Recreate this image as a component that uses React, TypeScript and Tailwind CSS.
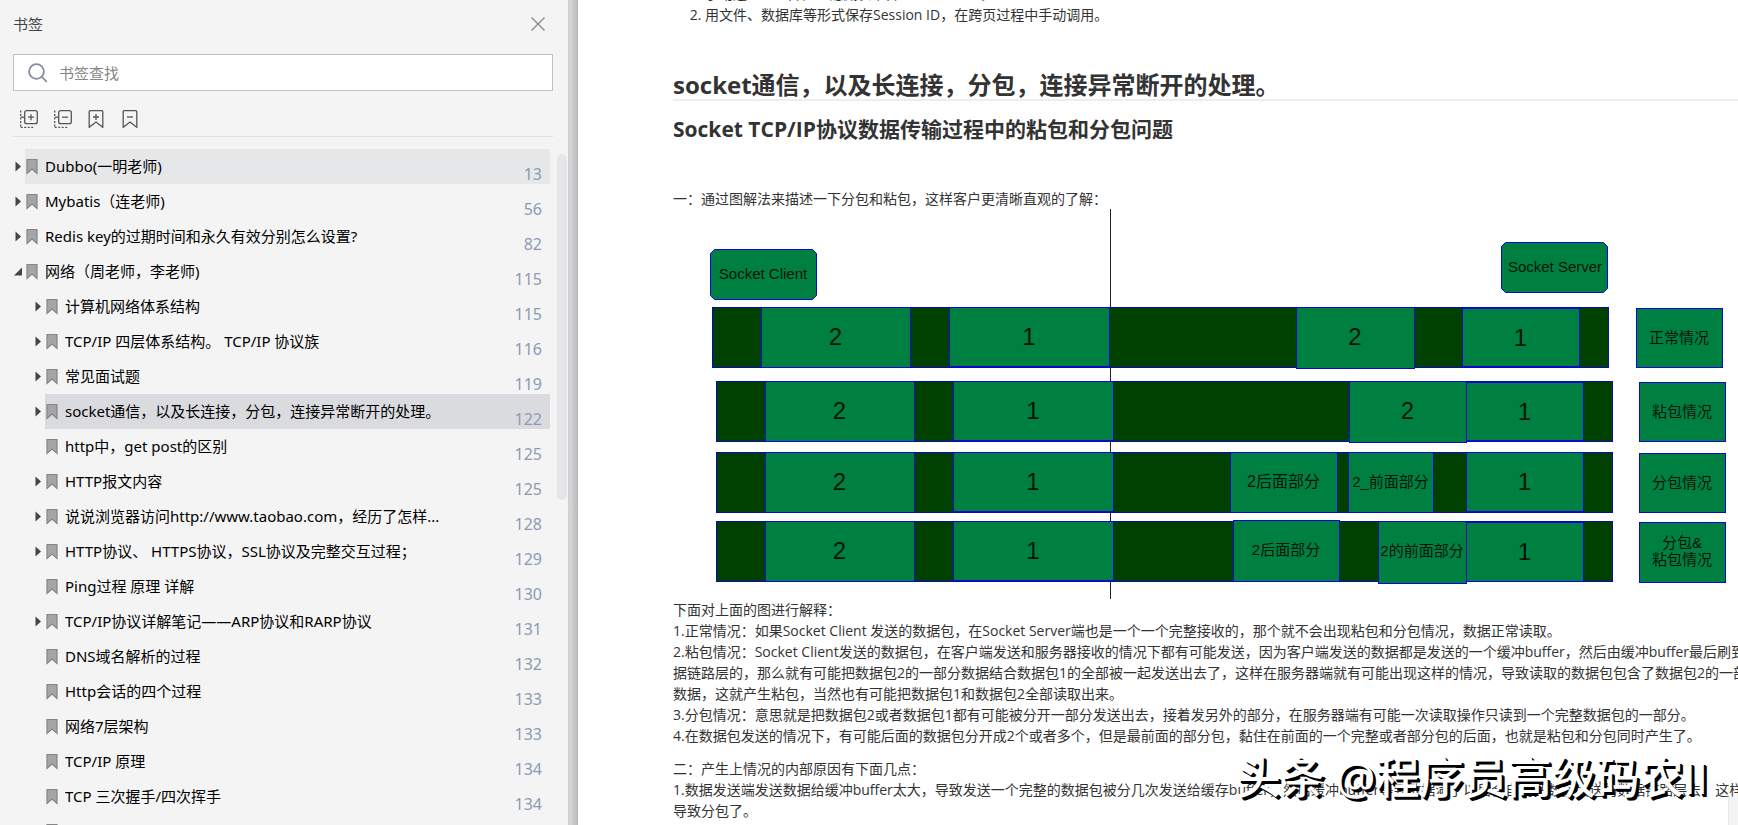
import { useState } from "react";

type Bookmark = {
  title: string;
  page?: number;
  level: 0 | 1;
  state?: "open" | "closed";
};

const bookmarks: Bookmark[] = [
  { title: "Dubbo(一明老师)", page: 13, level: 0, state: "closed" },
  { title: "Mybatis（连老师)", page: 56, level: 0, state: "closed" },
  { title: "Redis key的过期时间和永久有效分别怎么设置?", page: 82, level: 0, state: "closed" },
  { title: "网络（周老师，李老师)", page: 115, level: 0, state: "open" },
  { title: "计算机网络体系结构", page: 115, level: 1, state: "closed" },
  { title: "TCP/IP 四层体系结构。 TCP/IP 协议族", page: 116, level: 1, state: "closed" },
  { title: "常见面试题", page: 119, level: 1, state: "closed" },
  { title: "socket通信，以及长连接，分包，连接异常断开的处理。", page: 122, level: 1, state: "closed" },
  { title: "http中，get post的区别", page: 125, level: 1 },
  { title: "HTTP报文内容", page: 125, level: 1, state: "closed" },
  { title: "说说浏览器访问http://www.taobao.com，经历了怎样...", page: 128, level: 1, state: "closed" },
  { title: "HTTP协议、 HTTPS协议，SSL协议及完整交互过程；", page: 129, level: 1, state: "closed" },
  { title: "Ping过程 原理 详解", page: 130, level: 1 },
  { title: "TCP/IP协议详解笔记——ARP协议和RARP协议", page: 131, level: 1, state: "closed" },
  { title: "DNS域名解析的过程", page: 132, level: 1 },
  { title: "Http会话的四个过程", page: 133, level: 1 },
  { title: "网络7层架构", page: 133, level: 1 },
  { title: "TCP/IP 原理", page: 134, level: 1 },
  { title: "TCP 三次握手/四次挥手", page: 134, level: 1 },
  { title: "", level: 1 },
];

const Arrow = ({ state }: { state?: "open" | "closed" }) => (
  <svg width="8" height="12" viewBox="0 0 8 12" className="shrink-0" fill="#444">
    {state === "closed" && <path d="M1.500 .5v10l5.500-5z" />}
    {state === "open" && <path d="M8 1.500v8H0z" />}
  </svg>
);

const Ribbon = () => (
  <svg width="12" height="16" viewBox="0 0 12 16" className="shrink-0">
    <path d="M1 .5h10v14l-5-4.500-5 4.500z" fill="#a5a5a7" stroke="#858587" strokeWidth="1.200" />
  </svg>
);

function BookmarkRow({
  item,
  hovered,
  selected,
  onSelect,
}: {
  item: Bookmark;
  hovered: boolean;
  selected: boolean;
  onSelect: () => void;
}) {
  return (
    <li className={item.level === 1 ? "flex h-[35px] items-center pl-[34px]" : "flex h-[35px] items-center pl-[14px]"}>
      <Arrow state={item.state} />
      <button
        type="button"
        onClick={onSelect}
        className={
          "ml-[3px] flex h-full min-w-0 flex-1 items-center gap-[7px] pr-2 pl-px text-left " +
          (selected ? "bg-[#dadbdf]" : hovered ? "bg-[#e6e7e9]" : "")
        }
      >
        <Ribbon />
        <span className="flex-1 truncate pb-0.5 text-black">{item.title}</span>
        <span className="pt-[15px] text-base text-[#8d9ab5]">{item.page}</span>
      </button>
    </li>
  );
}

function ExpandIcon({ plus }: { plus?: boolean }) {
  return (
    <svg width="18" height="18" viewBox="0 0 18 18" fill="none" stroke="#555" strokeWidth="1.300">
      <rect x="4.700" y=".7" width="12.600" height="13" rx="2" />
      <path d={plus ? "M8 7.200h6M11 4.200v6" : "M8 7.200h6"} />
      <path d="M.7.500v17M.7 17.300h13" strokeDasharray="2 1.500" />
      <path d="M1 7.200h3" />
    </svg>
  );
}

function MarkIcon({ plus }: { plus?: boolean }) {
  return (
    <svg width="18" height="18" viewBox="0 0 18 18" fill="none" stroke="#555" strokeWidth="1.300">
      <path d="M1.200 1.700a1 1 0 0 1 1-1h11.600a1 1 0 0 1 1 1v15.600L8 12l-6.800 5.300z" />
      <path d={plus ? "M5 7h6M8 4v6" : "M5 7h6"} />
    </svg>
  );
}

function Sidebar() {
  const [selected, setSelected] = useState(7);

  return (
    <aside className="flex w-[578px] shrink-0 bg-[#f4f4f4] font-['Noto_Sans','Noto_Sans_CJK_SC',sans-serif] text-[15px] leading-5">
      <div className="flex min-w-0 flex-1 flex-col">
        <div className="flex h-[54px] items-center justify-between pr-[23px] pb-[7px] pl-[13px] text-[#444]">
          <h2>书签</h2>
          <button type="button" aria-label="关闭">
            <svg width="14" height="14" viewBox="0 0 14 14" stroke="#858585" strokeWidth="1.2">
              <path d="M.5.5l13 13M13.5.5l-13 13" />
            </svg>
          </button>
        </div>

        <label className="mr-[15px] ml-[13px] flex h-[37px] items-center gap-[11px] border border-[#bcc1c9] bg-white pl-[14px]">
          <svg width="20" height="20" viewBox="0 0 20 20" fill="none" stroke="#858da0" strokeWidth="1.8">
            <circle cx="8.500" cy="8.500" r="7.400" />
            <path d="M13.800 13.800l5 5" />
          </svg>
          <input
            type="text"
            aria-label="书签查找"
            placeholder="书签查找"
            className="min-w-0 flex-1 outline-none placeholder:text-[#858585]"
          />
        </label>

        <div className="mr-[15px] ml-[13px] flex h-[46px] items-end gap-4 border-b border-[#dfe0e2] pb-2 pl-[7px]">
          <button type="button" aria-label="全部展开" className="h-[18px]">
            <ExpandIcon plus />
          </button>
          <button type="button" aria-label="全部折叠" className="h-[18px]">
            <ExpandIcon />
          </button>
          <button type="button" aria-label="添加书签" className="h-[18px]">
            <MarkIcon plus />
          </button>
          <button type="button" aria-label="删除书签" className="h-[18px]">
            <MarkIcon />
          </button>
        </div>

        <div className="flex pt-3">
          <ul className="h-[676px] min-w-0 flex-1 overflow-hidden">
            {bookmarks.map((item, index) => (
              <BookmarkRow
                key={index}
                item={item}
                hovered={index === 0}
                selected={index === selected}
                onSelect={() => setSelected(index)}
              />
            ))}
          </ul>
          <div className="mt-[5px] mr-px ml-[7px] h-[346px] w-[10px] rounded-full bg-[#e4e6e8]" />
        </div>
      </div>
      <div className="w-[10px] border-l-2 border-[#cfd0d8] bg-linear-to-r from-[#d8d8d8] to-[#b8b8b8]" />
    </aside>
  );
}

type Cell = { x: number; y: number; w: number; h: number; text?: string; size?: number };

// dark bars that run from client to server
const bars: Cell[] = [
  { x: 39, y: 98, w: 896, h: 60 },
  { x: 43, y: 172, w: 896, h: 60 },
  { x: 43, y: 243, w: 896, h: 60 },
  { x: 43, y: 312, w: 896, h: 60 },
];

const cells: Cell[] = [
  { x: 88, y: 98, w: 149, h: 60, text: "2", size: 24 },
  { x: 276, y: 98, w: 160, h: 59, text: "1", size: 24 },
  { x: 623, y: 98, w: 118, h: 61, text: "2", size: 24 },
  { x: 789, y: 99, w: 117, h: 58, text: "1", size: 24 },

  { x: 92, y: 172, w: 149, h: 60, text: "2", size: 24 },
  { x: 280, y: 172, w: 160, h: 59, text: "1", size: 24 },
  { x: 676, y: 172, w: 117, h: 61, text: "2", size: 24 },
  { x: 793, y: 173, w: 117, h: 58, text: "1", size: 24 },

  { x: 92, y: 243, w: 149, h: 60, text: "2", size: 24 },
  { x: 280, y: 243, w: 160, h: 59, text: "1", size: 24 },
  { x: 557, y: 243, w: 107, h: 60, text: "2后面部分", size: 16 },
  { x: 675, y: 243, w: 85, h: 60, text: "2_前面部分", size: 15 },
  { x: 793, y: 243, w: 117, h: 59, text: "1", size: 24 },

  { x: 92, y: 312, w: 149, h: 60, text: "2", size: 24 },
  { x: 280, y: 312, w: 160, h: 59, text: "1", size: 24 },
  { x: 560, y: 311, w: 106, h: 61, text: "2后面部分", size: 15 },
  { x: 705, y: 312, w: 88, h: 62, text: "2的前面部分", size: 15 },
  { x: 793, y: 313, w: 117, h: 59, text: "1", size: 24 },

  { x: 963, y: 99, w: 86, h: 59, text: "正常情况", size: 15 },
  { x: 966, y: 173, w: 86, h: 59, text: "粘包情况", size: 15 },
  { x: 966, y: 244, w: 86, h: 59, text: "分包情况", size: 15 },
];

function PacketDiagram() {
  return (
    <svg
      width="1065"
      height="390"
      viewBox="0 0 1065 390"
      role="img"
      aria-label="分包和粘包图解"
      className="block max-w-none"
      fontFamily="'Liberation Sans', 'Noto Sans CJK SC', sans-serif"
      textAnchor="middle"
    >
      <path d="M437.500 0v390" stroke="#222" />
      <g fill="#004000" stroke="#0a0ab4">
        {bars.map((b, i) => (
          <rect key={i} x={b.x + 0.5} y={b.y + 0.5} width={b.w} height={b.h} />
        ))}
      </g>
      <g fill="#008040" stroke="#0808d8">
        {cells.map((c, i) => (
          <rect key={i} x={c.x + 0.5} y={c.y + 0.5} width={c.w} height={c.h} />
        ))}
        <rect x="966.500" y="313.500" width="86" height="60" />
        <path d="M41.500 40.500h98l4 4v42l-4 4h-98l-4-4v-42z" />
        <path d="M832.500 33.500h98l4 4v42l-4 4h-98l-4-4v-42z" />
      </g>
      <g fill="#00140a">
        {cells.map((c, i) => (
          <text key={i} x={c.x + c.w / 2} y={c.y + 30 + (c.size === 24 ? 8 : 5)} fontSize={c.size}>
            {c.text}
          </text>
        ))}
        <text x="90" y="70" fontSize="15">Socket Client</text>
        <text x="882" y="63" fontSize="15">Socket Server</text>
        <text x="1009" y="339" fontSize="15">分包&amp;</text>
        <text x="1009" y="356" fontSize="15">粘包情况</text>
      </g>
    </svg>
  );
}

function Document() {
  return (
    <main className="relative min-w-0 flex-1 overflow-hidden bg-white pl-[95px] text-sm leading-[21px] whitespace-nowrap text-[#333]">
      <ol className="-mt-[17px] list-decimal pl-8">
        <li>手动通过URL传值、隐藏表单传递Session ID。</li>
        <li>用文件、数据库等形式保存Session ID，在跨页过程中手动调用。</li>
      </ol>

      <h1 className="mt-[46px] border-b-2 border-[#eee] text-2xl leading-7 font-bold">
        socket通信，以及长连接，分包，连接异常断开的处理。
      </h1>
      <h2 className="mt-3 text-[21px] leading-8 font-bold">
        Socket TCP/IP协议数据传输过程中的粘包和分包问题
      </h2>

      <p className="mt-[43px]">一：通过图解法来描述一下分包和粘包，这样客户更清晰直观的了解：</p>
      <PacketDiagram />

      <p>
        下面对上面的图进行解释：
        <br />
        1.正常情况：如果Socket Client 发送的数据包，在Socket Server端也是一个一个完整接收的，那个就不会出现粘包和分包情况，数据正常读取。
        <br />
        2.粘包情况：Socket Client发送的数据包，在客户端发送和服务器接收的情况下都有可能发送，因为客户端发送的数据都是发送的一个缓冲buffer，然后由缓冲buffer最后刷到数
        <br />
        据链路层的，那么就有可能把数据包2的一部分数据结合数据包1的全部被一起发送出去了，这样在服务器端就有可能出现这样的情况，导致读取的数据包包含了数据包2的一部分
        <br />
        数据，这就产生粘包，当然也有可能把数据包1和数据包2全部读取出来。
        <br />
        3.分包情况：意思就是把数据包2或者数据包1都有可能被分开一部分发送出去，接着发另外的部分，在服务器端有可能一次读取操作只读到一个完整数据包的一部分。
        <br />
        4.在数据包发送的情况下，有可能后面的数据包分开成2个或者多个，但是最前面的部分包，黏住在前面的一个完整或者部分包的后面，也就是粘包和分包同时产生了。
      </p>
      <p className="mt-3">
        二：产生上情况的内部原因有下面几点：
        <br />
        1.数据发送端发送数据给缓冲buffer太大，导致发送一个完整的数据包被分几次发送给缓存buffer，然后缓冲buffer等到数据满了以后会自动把数据发送的数据链路层去，这样就
        <br />
        导致分包了。
      </p>

      <div className="absolute right-0 bottom-0 h-7 w-[10px] border-l border-[#e8e8e8] bg-[#f4f4f4]" />
      <div className="absolute right-[30px] bottom-[18px] text-[44px] leading-[60px] font-medium text-white [text-shadow:2px_2px_0_#000,3px_3px_0_#000]">
        头条 @程序员高级码农II
      </div>
    </main>
  );
}

export default function App() {
  return (
    <div className="flex h-screen overflow-hidden font-['Open_Sans','Noto_Sans_CJK_SC',sans-serif]">
      <Sidebar />
      <Document />
    </div>
  );
}
